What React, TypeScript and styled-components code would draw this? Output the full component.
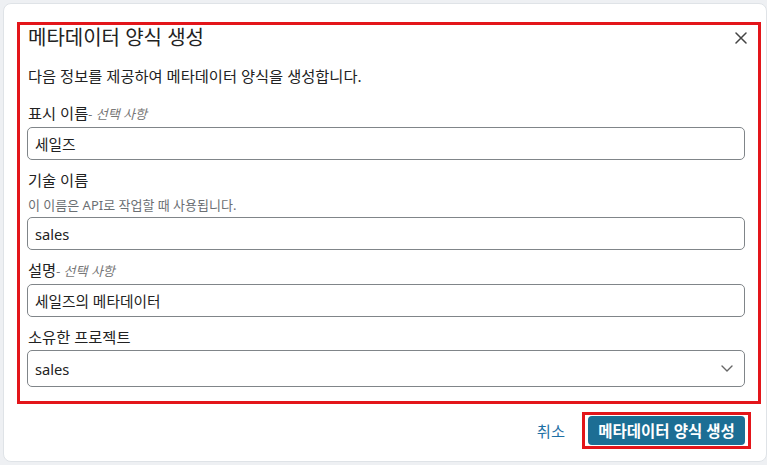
import React from "react";
import styled, { createGlobalStyle } from "styled-components";

const Global = createGlobalStyle`
  html, body { margin: 0; padding: 0; }
  body {
    background: #eef0f3;
    overflow: hidden;
    font-family: "Noto Sans", "Noto Sans CJK KR", sans-serif;
    color: #222;
  }
  * { box-sizing: border-box; }
`;

const Card = styled.div`
  margin: 3px 0 0 3px;
  width: 764px;
  height: 459px;
  background: #fff;
  border: 1px solid #dfe3e7;
  border-radius: 8px;
  padding: 18px 5px 0 13px;
  display: flex;
  flex-direction: column;
`;

const Highlight = styled.div`
  border: 3px solid #e3151a;
  padding: 0 13px 14px 7px;
  display: flex;
  flex-direction: column;
`;

const Header = styled.div`
  display: flex;
  align-items: center;
  justify-content: space-between;
  height: 25px;
  padding-top: 1px;
`;

const Title = styled.h2`
  margin: 0 0 0 1px;
  font-size: 20px;
  line-height: 24px;
  font-weight: 400;
  color: #222;
`;

const CloseButton = styled.button`
  border: none;
  background: none;
  padding: 0;
  margin-right: -3px;
  width: 14px;
  height: 14px;
  display: flex;
  align-items: center;
  justify-content: center;
  cursor: pointer;
`;

const Intro = styled.p`
  margin: 16px 0 17px 1px;
  font-size: 15.3px;
  line-height: 20px;
  color: #222;
`;

const Form = styled.div`
  display: flex;
  flex-direction: column;
  gap: 10px;
`;

const Field = styled.div`
  display: flex;
  flex-direction: column;
`;

const Label = styled.label<{ $tight?: boolean }>`
  font-size: 15.3px;
  line-height: 20px;
  color: #222;
  margin-left: 1px;
  margin-bottom: ${(p) => (p.$tight ? 0 : 3)}px;
`;

const Optional = styled.span`
  font-size: 13px;
  font-style: italic;
  color: #777;
`;

const Help = styled.div`
  font-size: 13px;
  line-height: 16px;
  color: #6b6f73;
  margin: 7px 0 4px 1px;
`;

const Input = styled.input`
  height: 33px;
  width: 100%;
  border: 1px solid #808589;
  border-radius: 5px;
  padding: 0 7px;
  font-family: "Noto Sans", "Noto Sans CJK KR", sans-serif;
  font-size: 14.7px;
  color: #222;
  background: #fff;
  outline: none;
`;

const Select = styled.div`
  height: 37px;
  border: 1px solid #808589;
  border-radius: 5px;
  padding: 0 11px 0 7px;
  display: flex;
  align-items: center;
  justify-content: space-between;
  font-size: 14.7px;
  color: #222;
`;

const Footer = styled.div`
  display: flex;
  justify-content: flex-end;
  align-items: center;
  padding: 8px 10px 0 0;
`;

const Cancel = styled.button`
  border: none;
  background: none;
  padding: 0;
  margin-right: 17px;
  font-family: "Noto Sans", "Noto Sans CJK KR", sans-serif;
  font-size: 15.3px;
  line-height: 20px;
  color: #1f70a5;
  cursor: pointer;
`;

const ButtonMark = styled.div`
  border: 3px solid #e3151a;
  padding: 1px 3px;
  display: flex;
`;

const Primary = styled.button`
  height: 29px;
  width: 157px;
  border: none;
  border-radius: 4px;
  background: #1c6e94;
  color: #fff;
  font-family: "Noto Sans", "Noto Sans CJK KR", sans-serif;
  font-size: 15.5px;
  font-weight: 700;
  padding: 0;
  cursor: pointer;
`;

export default function App() {
  return (
    <>
      <Global />
      <Card>
        <Highlight>
          <Header>
            <Title>메타데이터 양식 생성</Title>
            <CloseButton aria-label="닫기">
              <svg width="12" height="12" viewBox="0 0 12 12">
                <path d="M1 1L11 11M11 1L1 11" stroke="#444" strokeWidth="1.5" strokeLinecap="round" />
              </svg>
            </CloseButton>
          </Header>
          <Intro>다음 정보를 제공하여 메타데이터 양식을 생성합니다.</Intro>
          <Form>
            <Field>
              <Label>
                표시 이름<Optional>- 선택 사항</Optional>
              </Label>
              <Input defaultValue="세일즈" />
            </Field>
            <Field>
              <Label $tight>기술 이름</Label>
              <Help>이 이름은 API로 작업할 때 사용됩니다.</Help>
              <Input defaultValue="sales" />
            </Field>
            <Field>
              <Label>
                설명<Optional>- 선택 사항</Optional>
              </Label>
              <Input defaultValue="세일즈의 메타데이터" />
            </Field>
            <Field>
              <Label>소유한 프로젝트</Label>
              <Select>
                <span>sales</span>
                <svg width="12" height="7" viewBox="0 0 12 7">
                  <path d="M1 1L6 6L11 1" fill="none" stroke="#666" strokeWidth="1.4" strokeLinecap="round" strokeLinejoin="round" />
                </svg>
              </Select>
            </Field>
          </Form>
        </Highlight>
        <Footer>
          <Cancel>취소</Cancel>
          <ButtonMark>
            <Primary>메타데이터 양식 생성</Primary>
          </ButtonMark>
        </Footer>
      </Card>
    </>
  );
}
